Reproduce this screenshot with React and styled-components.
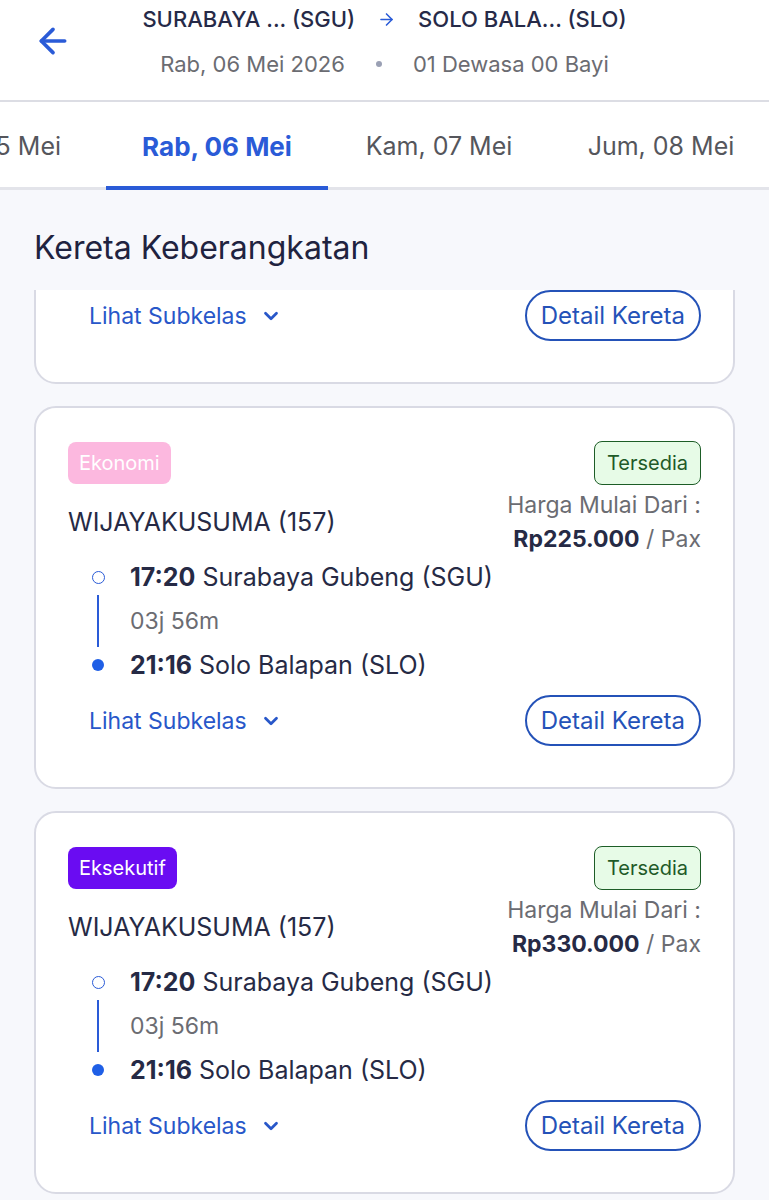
import React from "react";
import styled, { createGlobalStyle } from "styled-components";
import { ArrowLeft, ArrowRight, ChevronDown } from "lucide-react";

const GlobalStyle = createGlobalStyle`
  * { box-sizing: border-box; }
  body {
    margin: 0;
    background: #f7f8fc;
    font-family: "Inter", "Noto Sans", sans-serif;
    color: #262a45;
  }
`;

const trains = [
  { id: 1, kelas: "Ekonomi", name: "WIJAYAKUSUMA (157)", price: "Rp225.000" },
  { id: 2, kelas: "Ekonomi", name: "WIJAYAKUSUMA (157)", price: "Rp225.000" },
  { id: 3, kelas: "Eksekutif", name: "WIJAYAKUSUMA (157)", price: "Rp330.000" },
];

const tabs = ["Sel, 05 Mei", "Rab, 06 Mei", "Kam, 07 Mei", "Jum, 08 Mei"];

const App = () => {
  return (
    <>
      <GlobalStyle />
      <Page>
        <Header>
          <BackButton>
            <ArrowLeft size={40} strokeWidth={2.2} color="#2a5bd7" />
          </BackButton>
          <HeaderInfo>
            <Route>
              <span>SURABAYA ... (SGU)</span>
              <ArrowRight size={19} strokeWidth={2} color="#2a5bd7" />
              <span>SOLO BALA... (SLO)</span>
            </Route>
            <Meta>
              <span>Rab, 06 Mei 2026</span>
              <MetaDot />
              <span>01 Dewasa 00 Bayi</span>
            </Meta>
          </HeaderInfo>
        </Header>

        <Tabs>
          {tabs.map((t, i) => (
            <Tab key={t} $active={i === 1}>
              {t}
            </Tab>
          ))}
        </Tabs>

        <Content>
          <Heading>Kereta Keberangkatan</Heading>
          <Viewport>
            <List>
              {trains.map((train) => (
                <Card key={train.id}>
                  <Top>
                    <Left>
                      <ClassBadge $kelas={train.kelas}>{train.kelas}</ClassBadge>
                      <TrainName>{train.name}</TrainName>
                    </Left>
                    <Right>
                      <Status>Tersedia</Status>
                      <PriceLabel>Harga Mulai Dari :</PriceLabel>
                      <Price>
                        <strong>{train.price}</strong> / Pax
                      </Price>
                    </Right>
                  </Top>
                  <Timeline>
                    <Stop>
                      <Marker>
                        <Ring />
                      </Marker>
                      <StopText>
                        <strong>17:20</strong> Surabaya Gubeng (SGU)
                      </StopText>
                    </Stop>
                    <Stop>
                      <Marker>
                        <Line />
                      </Marker>
                      <Duration>03j 56m</Duration>
                    </Stop>
                    <Stop>
                      <Marker>
                        <Dot />
                      </Marker>
                      <StopText>
                        <strong>21:16</strong> Solo Balapan (SLO)
                      </StopText>
                    </Stop>
                  </Timeline>
                  <Footer>
                    <SubclassLink>
                      Lihat Subkelas
                      <ChevronDown size={22} strokeWidth={3} />
                    </SubclassLink>
                    <DetailButton>Detail Kereta</DetailButton>
                  </Footer>
                </Card>
              ))}
            </List>
          </Viewport>
        </Content>
      </Page>
    </>
  );
};

const Page = styled.div`
  width: 769px;
  height: 1200px;
  overflow: hidden;
  display: flex;
  flex-direction: column;
  background: #f7f8fc;
`;

const Header = styled.header`
  height: 102px;
  flex-shrink: 0;
  background: #ffffff;
  border-bottom: 2px solid #dcdde4;
  display: grid;
  grid-template-columns: 1fr auto 1fr;
  align-items: start;
`;

const BackButton = styled.div`
  padding: 21px 0 0 33px;
  display: flex;
`;

const HeaderInfo = styled.div`
  padding-top: 5px;
  display: flex;
  flex-direction: column;
  align-items: center;
  gap: 17px;
`;

const Route = styled.div`
  display: flex;
  align-items: center;
  gap: 22px;
  font-size: 22px;
  line-height: 28px;
  font-weight: 500;
  color: #262a48;
  white-space: nowrap;
`;

const Meta = styled.div`
  display: flex;
  align-items: center;
  gap: 31px;
  font-size: 22px;
  line-height: 28px;
  color: #6b6c72;
  white-space: nowrap;
`;

const MetaDot = styled.span`
  width: 6px;
  height: 6px;
  border-radius: 50%;
  background: #9aa0b4;
`;

const Tabs = styled.nav`
  height: 88px;
  flex-shrink: 0;
  background: #ffffff;
  border-bottom: 3px solid #e3e4ea;
  display: flex;
  margin-left: -116px;
  width: calc(100% + 116px);
`;

const Tab = styled.div`
  flex: 0 0 222px;
  display: flex;
  align-items: center;
  justify-content: center;
  font-size: ${(p) => (p.$active ? "26px" : "25px")};
  font-weight: ${(p) => (p.$active ? 700 : 400)};
  color: ${(p) => (p.$active ? "#2a5bd7" : "#55565c")};
  box-shadow: ${(p) => (p.$active ? "inset 0 -4px 0 #2a5bd7" : "none")};
  margin-bottom: -3px;
  white-space: nowrap;
`;

const Content = styled.main`
  flex: 1;
  display: flex;
  flex-direction: column;
  min-height: 0;
`;

const Heading = styled.h1`
  margin: 0;
  padding: 40px 34px 24px;
  font-size: 32px;
  line-height: 36px;
  font-weight: 400;
  color: #1f2340;
`;

const Viewport = styled.div`
  flex: 1;
  overflow: hidden;
  padding: 0 34px;
`;

const List = styled.div`
  margin-top: -289px;
  display: flex;
  flex-direction: column;
  gap: 22px;
`;

const Card = styled.section`
  background: #ffffff;
  border: 2px solid #d9dae4;
  border-radius: 22px;
  padding: 34px 32px 41px;
`;

const Top = styled.div`
  display: flex;
  justify-content: space-between;
  align-items: flex-start;
`;

const Left = styled.div`
  display: flex;
  flex-direction: column;
  align-items: flex-start;
  gap: 23px;
`;

const badgeColors = {
  Ekonomi: "#fcb8df",
  Eksekutif: "#6a0cf2",
};

const ClassBadge = styled.span`
  height: 42px;
  padding: 0 11px;
  display: inline-flex;
  align-items: center;
  border-radius: 8px;
  font-size: 20px;
  color: #ffffff;
  background: ${(p) => badgeColors[p.$kelas]};
`;

const TrainName = styled.div`
  font-size: 25px;
  line-height: 30px;
  color: #262a45;
`;

const Right = styled.div`
  display: flex;
  flex-direction: column;
  align-items: flex-end;
`;

const Status = styled.span`
  height: 44px;
  margin-top: -1px;
  margin-bottom: 3px;
  padding: 0 12px;
  display: inline-flex;
  align-items: center;
  border-radius: 8px;
  border: 1.5px solid #1d5d27;
  background: #e7fbe7;
  color: #1f5a28;
  font-size: 20px;
`;

const PriceLabel = styled.div`
  font-size: 23px;
  line-height: 34px;
  color: #6b6c72;
`;

const Price = styled.div`
  font-size: 23px;
  line-height: 34px;
  color: #6b6c72;
  strong {
    font-weight: 700;
    color: #262a45;
  }
`;

const Timeline = styled.div`
  margin-top: 1px;
  padding-left: 20px;
  display: flex;
  flex-direction: column;
  gap: 4px;
`;

const Stop = styled.div`
  height: 40px;
  display: flex;
  align-items: center;
  gap: 22px;
`;

const Marker = styled.div`
  width: 20px;
  display: flex;
  justify-content: center;
  align-items: center;
`;

const Ring = styled.span`
  width: 13px;
  height: 13px;
  border-radius: 50%;
  border: 1.5px solid #2a5bd7;
`;

const Dot = styled.span`
  width: 12px;
  height: 12px;
  border-radius: 50%;
  background: #1f5fe6;
`;

const Line = styled.span`
  width: 1.5px;
  height: 52px;
  background: #2a5bd7;
`;

const StopText = styled.div`
  font-size: 25px;
  color: #262a45;
  white-space: nowrap;
  strong {
    font-weight: 700;
  }
`;

const Duration = styled.div`
  font-size: 23px;
  color: #6b6c72;
`;

const Footer = styled.div`
  margin-top: 10px;
  padding-left: 21px;
  display: flex;
  justify-content: space-between;
  align-items: center;
`;

const SubclassLink = styled.div`
  display: flex;
  align-items: center;
  gap: 13px;
  font-size: 23px;
  color: #2857c9;
`;

const DetailButton = styled.button`
  height: 51px;
  padding: 0 14px;
  border-radius: 26px;
  border: 2px solid #2452b8;
  background: #ffffff;
  font-family: inherit;
  font-size: 24px;
  color: #2452b8;
`;

export default App;
